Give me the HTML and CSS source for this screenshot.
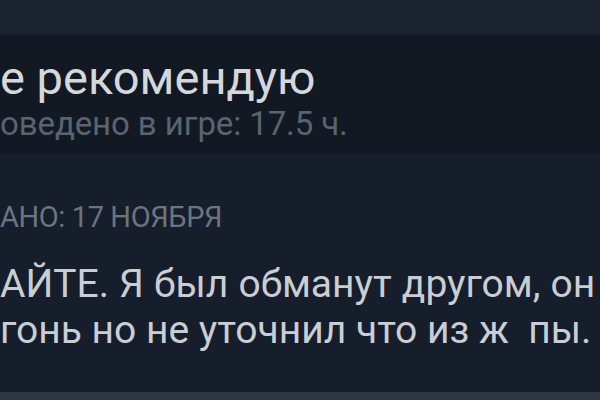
FILE: index.html
```html
<!DOCTYPE html>
<html lang="ru">
<head>
<meta charset="utf-8">
<link rel="stylesheet" href="styles.css">
</head>
<body>
<div class="page">
  <div class="topbar"></div>
  <div class="header">
    <div class="verdict"><span class="cut cut-verdict">Н</span>е рекомендую</div>
    <div class="playtime"><span class="cut cut-play">Пр</span>оведено в игре: 17.5 ч.</div>
  </div>
  <div class="review">
    <div class="date"><span class="cut cut-date">ОПУБЛИКОВ</span>АНО: 17 НОЯБРЯ</div>
    <div class="text">
      <div class="line"><span class="cut cut-l1">НЕ ПОКУП</span>АЙТЕ. Я был обманут другом, он</div>
      <div class="line">гонь но не уточнил что из ж&nbsp;&nbsp;пы.</div>
    </div>
  </div>
  <div class="footer"></div>
</div>
</body>
</html>
```
FILE: styles.css
```css
html, body {
  margin: 0;
  padding: 0;
  background: #161e2b;
}
.page {
  width: 600px;
  height: 400px;
  overflow: hidden;
  display: flex;
  flex-direction: column;
  font-family: Roboto, "Noto Sans", sans-serif;
}
.topbar {
  height: 34px;
  background: #1a2230;
  border-bottom: 2px solid #161d29;
}
.header {
  height: 118px;
  background: #121923;
  white-space: nowrap;
  overflow: hidden;
}
.verdict {
  margin-top: 15px;
  font-size: 47px;
  line-height: 54px;
  color: #d4d8dd;
}
.playtime {
  margin-top: 1px;
  font-size: 33px;
  line-height: 36px;
  color: #5b6370;
  letter-spacing: -0.1px;
}
.cut {
  display: inline-block;
  overflow: hidden;
  vertical-align: bottom;
}
.cut-verdict { margin-left: -34px; width: 34px; }
.cut-play { margin-left: -39px; width: 39px; }
.cut-date { margin-left: -190px; width: 190px; }
.cut-l1 { margin-left: -189px; width: 189px; }
.review {
  flex: 1;
  background: #161e2b;
  white-space: nowrap;
  overflow: hidden;
}
.date {
  margin-top: 47px;
  font-size: 29px;
  line-height: 32px;
  color: #6c7480;
  letter-spacing: -0.4px;
}
.text {
  margin-top: 28px;
  font-size: 39px;
  line-height: 46px;
  color: #c9ced4;
}
.line:first-child {
  word-spacing: 0.4px;
}
.footer {
  height: 8px;
  background: #2c3541;
}
```
